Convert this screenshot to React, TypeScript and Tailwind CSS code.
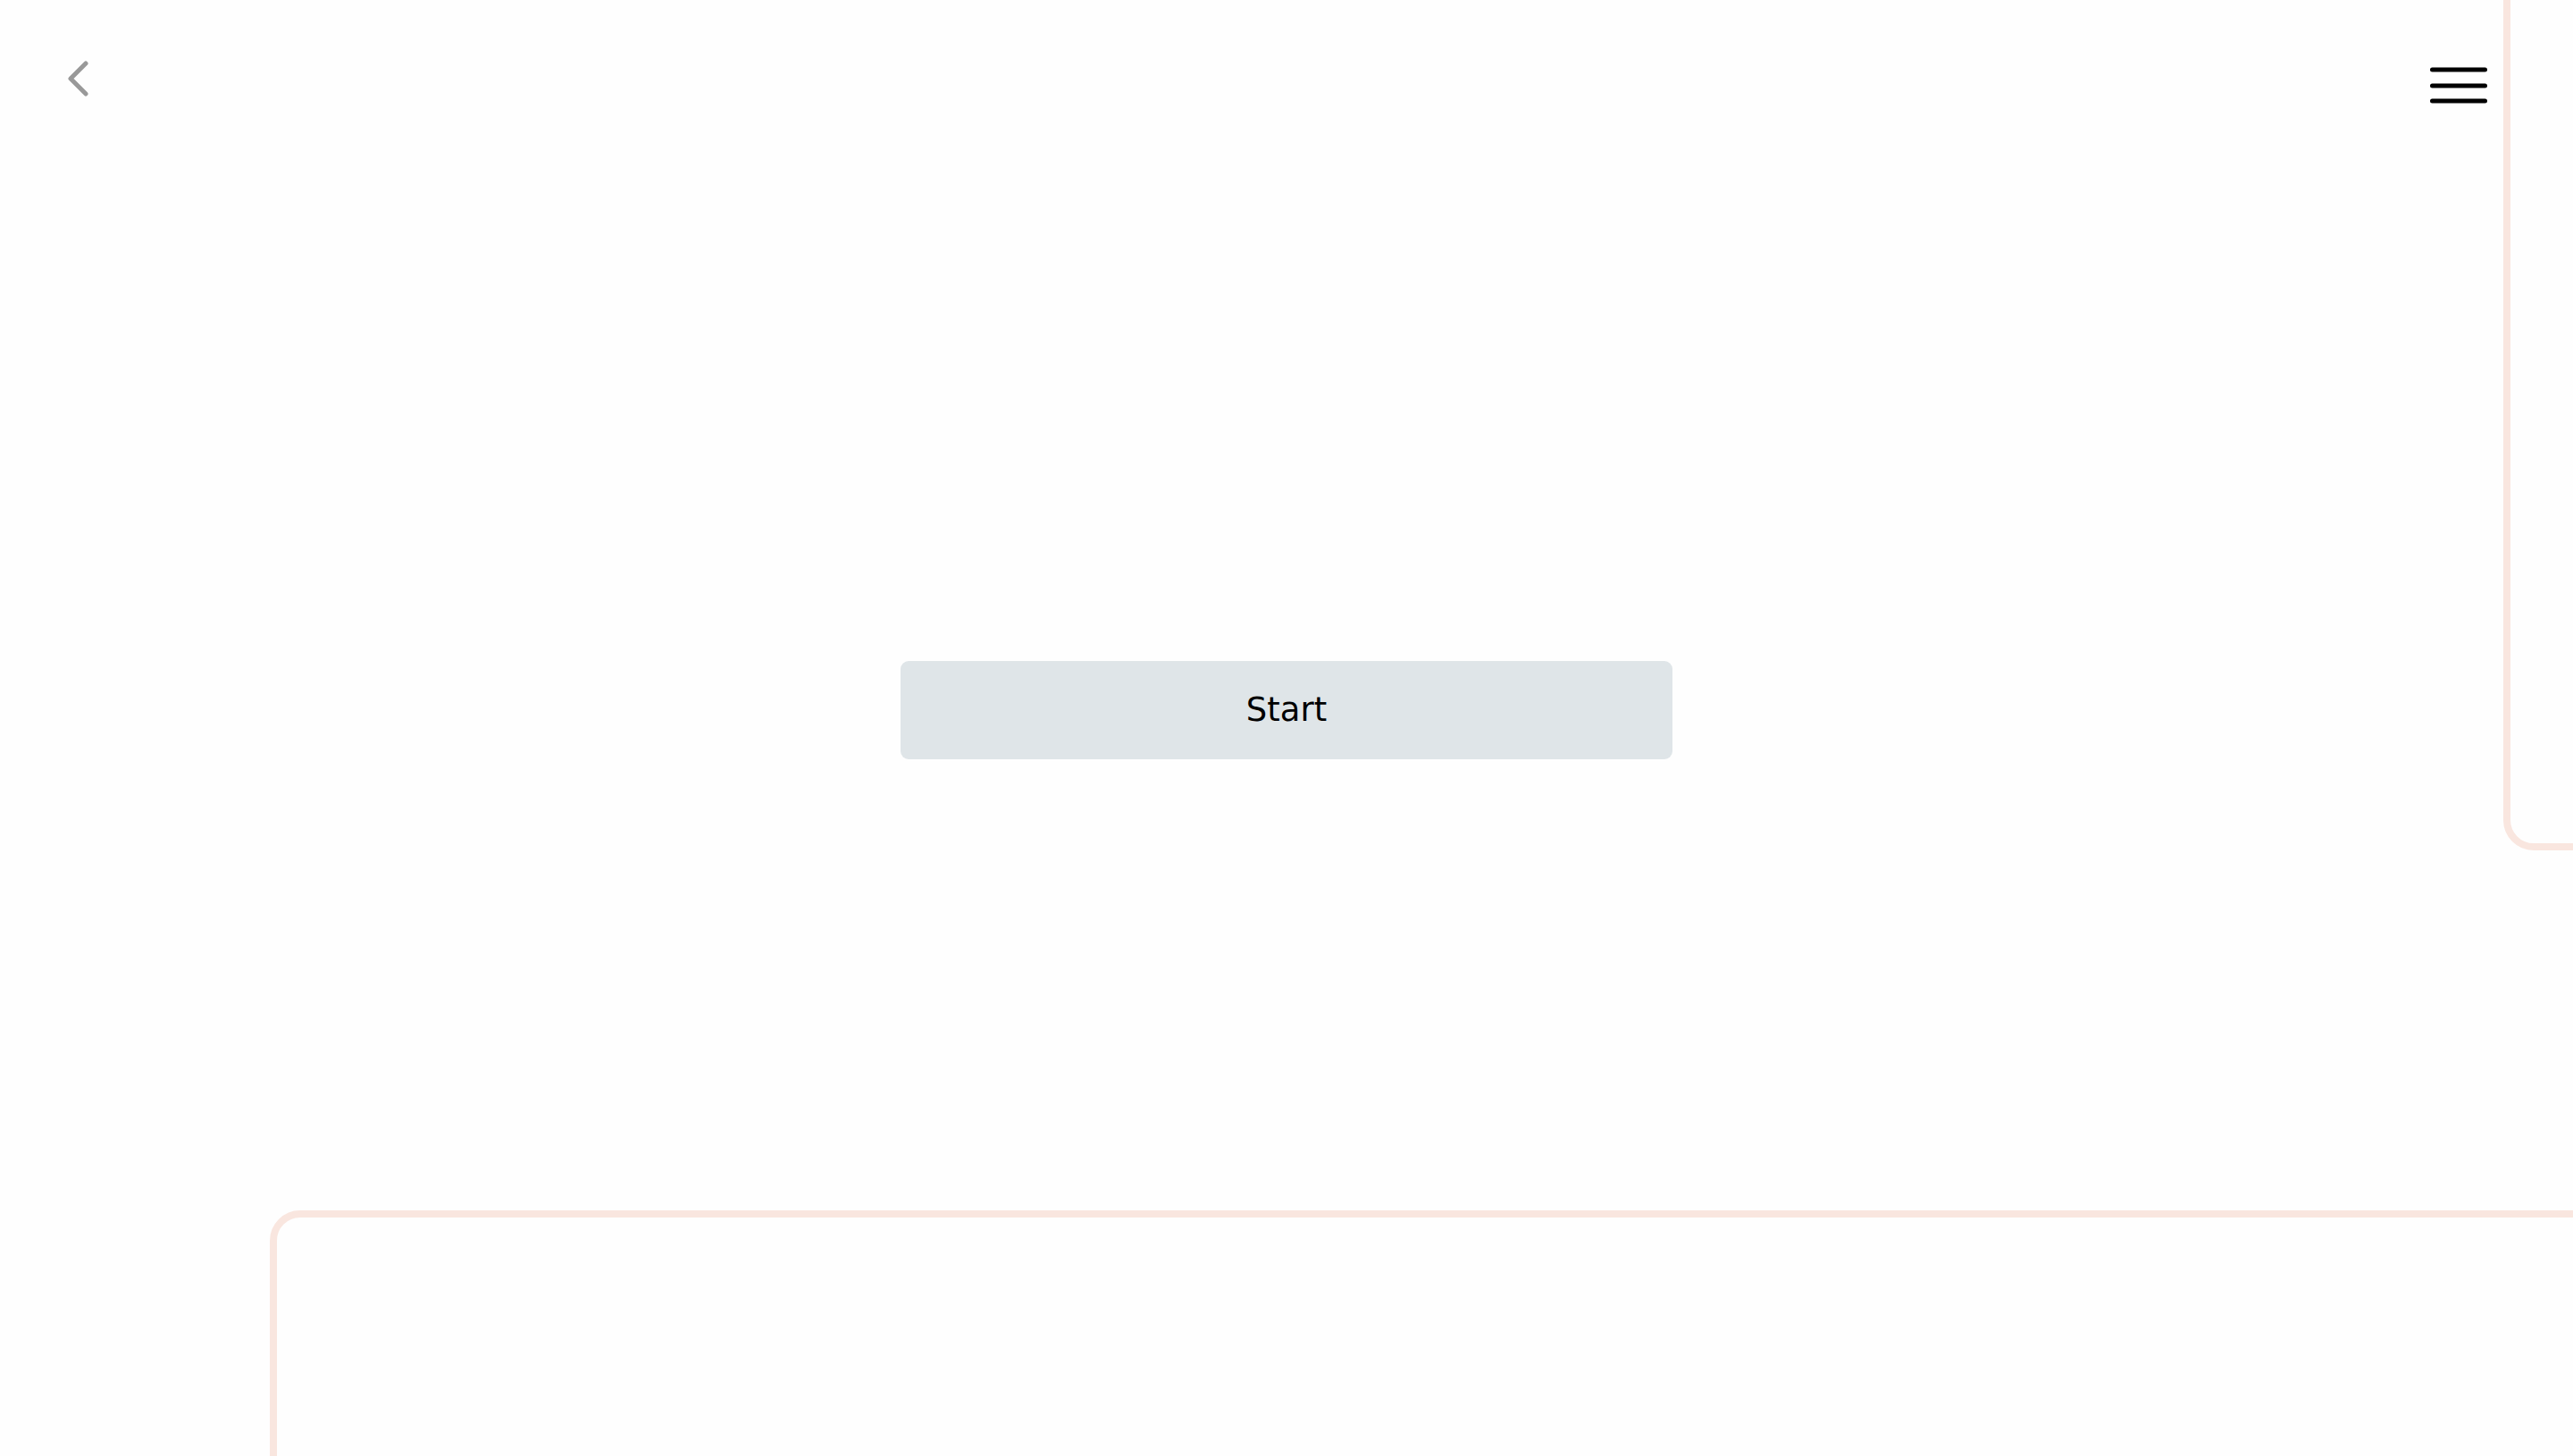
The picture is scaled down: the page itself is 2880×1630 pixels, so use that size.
import React from 'react';

export default function App() {
  return (
    <div className="relative w-full h-[1630px] overflow-hidden bg-[#fefefe]" style={{ fontFamily: '"DejaVu Sans", "Open Sans", sans-serif' }}>
      {/* decorative frames */}
      <div className="pointer-events-none absolute left-[2802px] top-[-60px] w-[300px] h-[1012px] rounded-[34px] border-[8px] border-[#f9e6df]" />
      <div className="pointer-events-none absolute left-[302px] top-[1355px] w-[2800px] h-[500px] rounded-[34px] border-[8px] border-[#f9e6df]" />

      <header className="relative flex items-start justify-between pl-[75px] pr-[96px] pt-[68px]">
        <button aria-label="Back" className="block">
          <svg width="24" height="40" viewBox="0 0 24 40" fill="none">
            <path d="M21 3 L4 20 L21 37" stroke="#999999" strokeWidth="5" strokeLinecap="round" strokeLinejoin="round" />
          </svg>
        </button>
        <button aria-label="Menu" className="mt-[7px] block">
          <svg width="64" height="42" viewBox="0 0 64 42" fill="none">
            <path d="M2.5 3 H61.5 M2.5 21 H61.5 M2.5 38 H61.5" stroke="#000" strokeWidth="5" strokeLinecap="round" />
          </svg>
        </button>
      </header>

      <main className="relative flex justify-center mt-[623px]">
        <button className="w-[864px] h-[110px] rounded-[9px] bg-[#dfe5e8] text-black text-[37px] flex items-center justify-center">
          Start
        </button>
      </main>
    </div>
  );
}
